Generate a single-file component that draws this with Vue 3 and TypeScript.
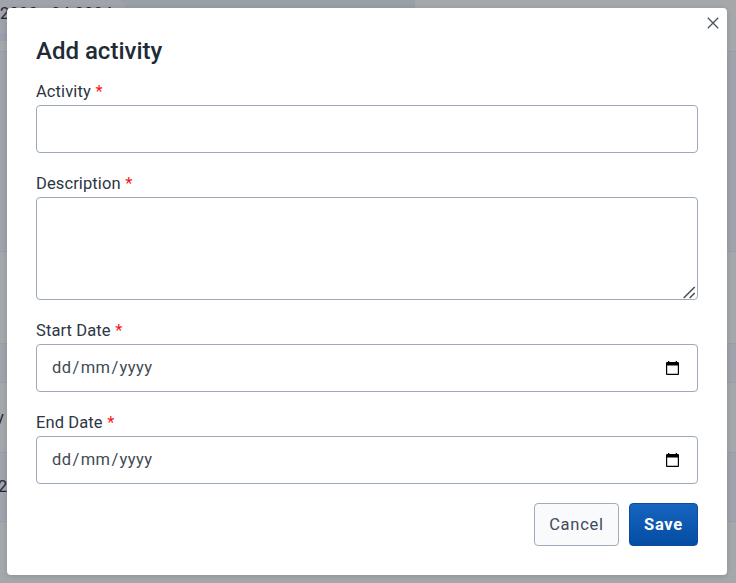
<script setup lang="ts">
import { ref } from 'vue'

interface DateField {
  label: string
  parts: string[]
}

const activity = ref('')
const description = ref('')
const dateFields: DateField[] = [
  { label: 'Start Date', parts: ['dd', 'mm', 'yyyy'] },
  { label: 'End Date', parts: ['dd', 'mm', 'yyyy'] },
]
</script>

<template>
  <div class="screen">
    <div class="backdrop">
      <div class="tabs"><div class="tab">2023 - 04.2024</div></div>
      <div class="strip"></div>
      <div class="row head"></div>
      <div class="row plain"></div>
      <div class="row tinted"></div>
      <div class="row plain day"><span class="clip">y</span></div>
      <div class="row tinted year"><span class="clip">2</span></div>
      <div class="row rest"></div>
    </div>

    <form class="modal" @submit.prevent>
      <button class="close" type="button" aria-label="Close">
        <svg width="12" height="12" viewBox="0 0 12 12"><path d="M.8.8l10.4 10.4M11.2.8L.8 11.2" fill="none" stroke="#4a5563" stroke-width="1.3" /></svg>
      </button>
      <h2>Add activity</h2>
      <div class="field">
        <label for="activity">Activity <b>*</b></label>
        <input id="activity" v-model="activity" class="control" type="text" />
      </div>
      <div class="field">
        <label for="description">Description <b>*</b></label>
        <div class="area">
          <textarea id="description" v-model="description" class="control"></textarea>
          <svg class="grip" width="13" height="13" viewBox="0 0 13 13"><path d="M.7 12L11.7 1M6.7 12L11.7 7" fill="none" stroke="#4c4c4c" stroke-width="1.5" /></svg>
        </div>
      </div>
      <div v-for="field in dateFields" :key="field.label" class="field">
        <label>{{ field.label }} <b>*</b></label>
        <div class="control date" tabindex="0">
          <span class="value"><template v-for="(part, i) in field.parts" :key="i"><span v-if="i">/</span><span class="part">{{ part }}</span></template></span>
          <svg width="13" height="14" viewBox="0 0 13 14"><path d="M1 1h1V0h1.3v1h6.4V0H11v1h1q1 0 1 1v11q0 1-1 1H1q-1 0-1-1V2q0-1 1-1zM1.2 4.5v8.3h10.6V4.5z" fill="#000" fill-rule="evenodd" /></svg>
        </div>
      </div>
      <div class="actions">
        <button class="btn cancel" type="button">Cancel</button>
        <button class="btn save" type="submit">Save</button>
      </div>
    </form>
  </div>
</template>

<style>
body {
  margin: 0;
  overflow: hidden;
}
</style>

<style scoped>
.screen {
  position: relative;
  width: 736px;
  height: 583px;
  overflow: hidden;
  box-sizing: border-box;
  font-family: Roboto, "Liberation Sans", sans-serif;
  font-size: 16.5px;
  color: #2d3643;
}
.screen * { box-sizing: border-box; }
.backdrop {
  height: 583px;
  display: flex;
  flex-direction: column;
  background: #a5a8ab;
}
.tabs {
  width: 415px;
  height: 33px;
  background: #979fa7;
}
.tab {
  width: 125px;
  height: 33px;
  border-top-right-radius: 8px;
  background: #a0a3ac;
  color: #202832;
  font-size: 16.5px;
  letter-spacing: .2px;
  line-height: 27px;
  white-space: nowrap;
}
.strip {
  width: 415px;
  height: 8px;
  background: #989fa8;
}
.row {
  border-bottom: 1px solid #979ea7;
  background: #a5a8ab;
  color: #202832;
}
.head {
  height: 211px;
  border-top: 10px solid #a5a8ab;
  background: #a0a3ac;
  box-shadow: inset 0 1px #989da2;
}
.plain { height: 92px; }
.tinted { height: 39px; background: #a0a3ac; }
.day { height: 70px; line-height: 70px; }
.year { height: 69px; line-height: 68px; }
.day .clip { margin-left: -4px; }
.year .clip { margin-left: -2px; }
.rest { flex: 1; border: 0; }
.modal {
  position: absolute;
  left: 7px;
  top: 8px;
  width: 720px;
  height: 567px;
  padding: 27px 29px 29px;
  border-radius: 4px;
  background: #fff;
  box-shadow: 0 1px 5px rgba(40, 48, 58, .2);
}
.close {
  position: absolute;
  top: 9px;
  right: 8px;
  width: 12px;
  height: 12px;
  padding: 0;
  border: 0;
  background: none;
}
.close svg { display: block; }
h2 {
  margin: 0 0 13px;
  font-size: 24px;
  line-height: 32px;
  font-weight: 500;
  color: #212b36;
}
.field { margin-bottom: 19px; }
label {
  display: block;
  height: 25px;
  line-height: 23px;
  letter-spacing: .1px;
}
label b { margin-left: .5px; font-weight: 400; color: #f51616; }
.control {
  display: block;
  width: 662px;
  height: 48px;
  padding: 0 16px;
  border: 1px solid #9caaba;
  border-radius: 4px;
  background: #fff;
  font: inherit;
  outline: 0;
}
.area { position: relative; }
textarea.control { height: 103px; resize: none; }
.grip { position: absolute; right: 2px; bottom: 1px; }
.date {
  display: flex;
  align-items: center;
  justify-content: space-between;
  padding: 0 18px 0 14px;
  color: #414a55;
}
.value { line-height: 46px; letter-spacing: .4px; white-space: nowrap; }
.part { padding: 0 1px; }
.actions {
  display: flex;
  justify-content: flex-end;
  gap: 10px;
}
.btn {
  height: 43px;
  padding: 0;
  border: 1px solid #a0acba;
  border-radius: 4px;
  font: 400 16.5px/41px Roboto, "Liberation Sans", sans-serif;
  letter-spacing: .75px;
}
.cancel { width: 85px; background: #f9fafb; color: #404b5a; }
.save {
  width: 69px;
  border-color: #0b4ba0;
  background: linear-gradient(#1665c0, #044da2);
  color: #fff;
  font-weight: 700;
}
</style>
